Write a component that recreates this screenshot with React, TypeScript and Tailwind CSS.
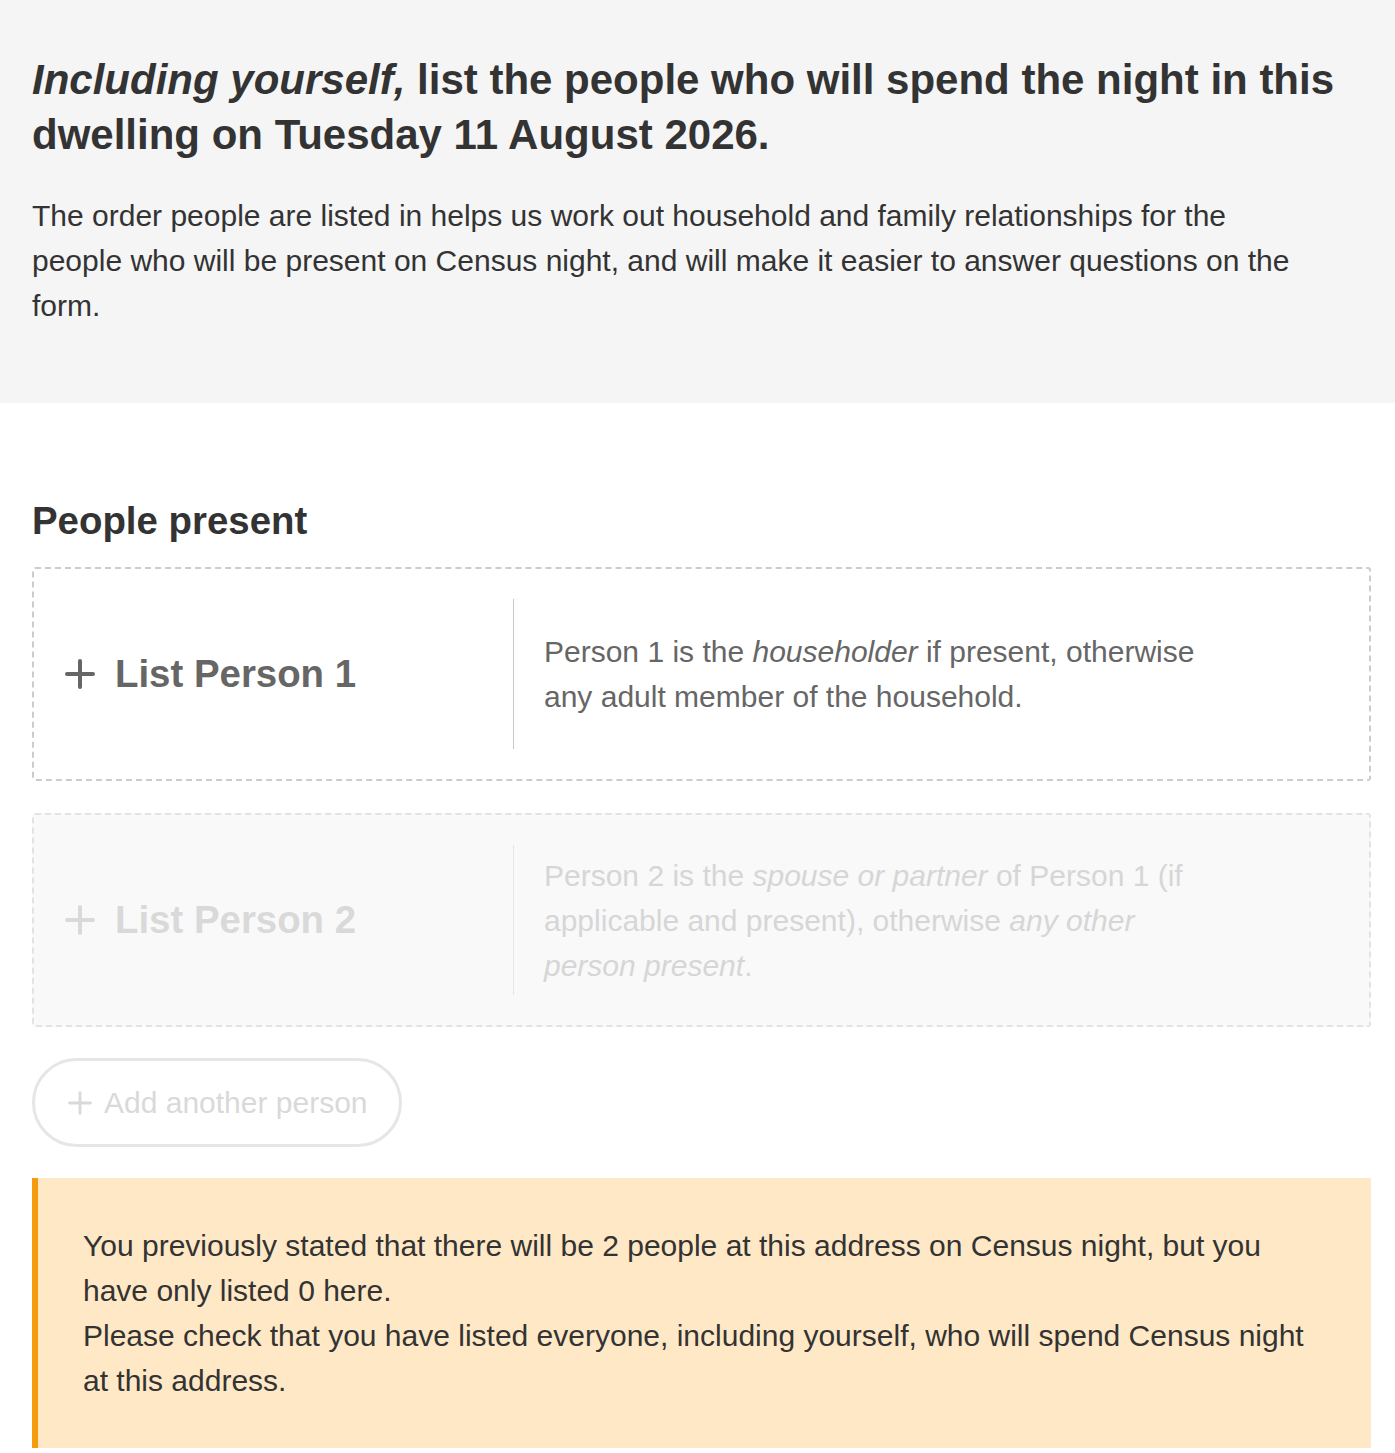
import React from 'react'

function PlusIcon({ size, stroke, className }: { size: number; stroke: number; className?: string }) {
  return (
    <svg width={size} height={size} viewBox="0 0 30 30" className={className} fill="none">
      <line x1="15" y1="2" x2="15" y2="28" stroke="currentColor" strokeWidth={stroke} strokeLinecap="round" />
      <line x1="2" y1="15" x2="28" y2="15" stroke="currentColor" strokeWidth={stroke} strokeLinecap="round" />
    </svg>
  )
}

function PersonCard({
  label,
  disabled,
  children,
}: {
  label: string
  disabled?: boolean
  children: React.ReactNode
}) {
  return (
    <div
      className={
        disabled
          ? 'flex rounded-[3px] border-2 border-dashed border-[#e3e3e3] bg-[#f9f9f9] py-[30px]'
          : 'flex rounded-[3px] border-2 border-dashed border-[#cccccc] bg-white py-[30px]'
      }
    >
      <div
        className={
          disabled
            ? 'flex w-[480px] shrink-0 items-center gap-[20px] border-r border-[#e6e6e6] pl-[31px] text-[#d9d9d9]'
            : 'flex w-[480px] shrink-0 items-center gap-[20px] border-r border-[#c8c8c8] pl-[31px] text-[#666666]'
        }
      >
        <PlusIcon size={30} stroke={4} />
        <span className="text-[38.4px] font-bold leading-[46px]">{label}</span>
      </div>
      <div
        className={
          disabled
            ? 'flex min-h-[150px] items-center pl-[30px] text-[#d6d6d6]'
            : 'flex min-h-[150px] items-center pl-[30px] text-[#666666]'
        }
      >
        <p className="max-w-[665px] text-[30px] leading-[45px]">{children}</p>
      </div>
    </div>
  )
}

export default function App() {
  return (
    <div className="min-h-screen bg-white text-[#333333]" style={{ fontFamily: '"Liberation Sans", Arial, sans-serif' }}>
      {/* Intro */}
      <div className="bg-[#f5f5f5] pl-8 pr-6 pt-[52px] pb-[75px]">
        <h1 className="text-[42px] font-bold leading-[55px]">
          <em>Including yourself,</em> list the people who will spend the night in this dwelling on Tuesday 11 August
          2026.
        </h1>
        <p className="mt-[31px] max-w-[1285px] text-[30px] leading-[45px]">
          The order people are listed in helps us work out household and family relationships for the people who will be
          present on Census night, and will make it easier to answer questions on the form.
        </p>
      </div>

      {/* People */}
      <div className="pl-8 pr-6 pt-[96px]">
        <h2 className="text-[38.4px] font-bold leading-[44px]">People present</h2>

        <div className="mt-6 flex flex-col gap-[32px]">
          <PersonCard label="List Person 1">
            Person 1 is the <em>householder</em> if present, otherwise any adult member of the household.
          </PersonCard>
          <PersonCard label="List Person 2" disabled>
            Person 2 is the <em>spouse or partner</em> of Person 1 (if applicable and present), otherwise{' '}
            <em>any other person present</em>.
          </PersonCard>
        </div>

        <button className="mt-[31px] flex items-center gap-[12px] rounded-full border-[3px] border-[#e6e6e6] bg-white py-[19px] pl-[33px] pr-[31px] text-[30px] leading-[45px] text-[#d9d9d9]">
          <PlusIcon size={24} stroke={3.5} />
          <span>Add another person</span>
        </button>

        <div className="mt-[31px] border-l-[6px] border-[#f59c0e] bg-[#ffe8c5] pl-[45px] pr-[50px] pt-[45px] pb-[45px] text-[30px] leading-[45px] text-[#333333]">
          <p>You previously stated that there will be 2 people at this address on Census night, but you have only listed 0 here.</p>
          <p>Please check that you have listed everyone, including yourself, who will spend Census night at this address.</p>
        </div>
      </div>
    </div>
  )
}
